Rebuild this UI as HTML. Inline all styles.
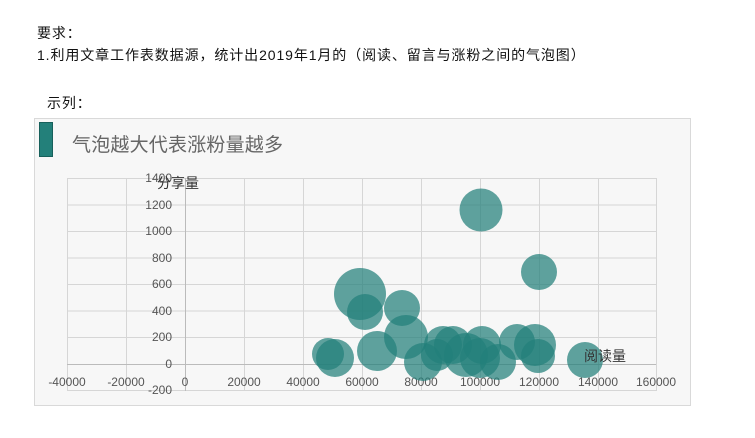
<!DOCTYPE html>
<html><head><meta charset="utf-8"><style>
body{margin:0;width:755px;height:438px;background:#fff;font-family:"Liberation Sans","Noto Sans CJK SC",sans-serif;position:relative;overflow:hidden}
.t{position:absolute;font-size:14px;color:#111;letter-spacing:0.9px;white-space:nowrap}
</style></head><body>
<div class="t" style="left:37px;top:23px">要求：</div>
<div class="t" style="left:37px;top:45px">1.利用文章工作表数据源，统计出2019年1月的（阅读、留言与涨粉之间的气泡图）</div>
<div class="t" style="left:47px;top:93px">示列：</div>
<svg style="position:absolute;left:0;top:0" width="755" height="438" font-family="Liberation Sans,Noto Sans CJK SC,sans-serif">
<rect x="34.5" y="118.5" width="656" height="287" fill="#f7f7f7" stroke="#d9d9d9"/>
<rect x="39.5" y="122.5" width="13" height="34" fill="#23807a" stroke="#17605b"/>
<text x="72" y="151" font-size="19" fill="#666" letter-spacing="0.2">气泡越大代表涨粉量越多</text>
<g stroke="#d6d6d6" stroke-width="1">
<line x1="67" y1="178.5" x2="656" y2="178.5"/><line x1="67" y1="205" x2="656" y2="205"/><line x1="67" y1="231.5" x2="656" y2="231.5"/><line x1="67" y1="258" x2="656" y2="258"/><line x1="67" y1="284.5" x2="656" y2="284.5"/><line x1="67" y1="311" x2="656" y2="311"/><line x1="67" y1="337.5" x2="656" y2="337.5"/><line x1="67" y1="390.5" x2="656" y2="390.5"/>
<line x1="67.5" y1="178" x2="67.5" y2="391"/><line x1="126.5" y1="178" x2="126.5" y2="391"/><line x1="244.5" y1="178" x2="244.5" y2="391"/><line x1="303.5" y1="178" x2="303.5" y2="391"/><line x1="362.5" y1="178" x2="362.5" y2="391"/><line x1="421.5" y1="178" x2="421.5" y2="391"/><line x1="480.5" y1="178" x2="480.5" y2="391"/><line x1="539.5" y1="178" x2="539.5" y2="391"/><line x1="598.5" y1="178" x2="598.5" y2="391"/><line x1="656.5" y1="178" x2="656.5" y2="391"/>
</g>
<g stroke="#bbb"><line x1="67" y1="364.5" x2="656" y2="364.5"/><line x1="185.5" y1="178" x2="185.5" y2="391"/></g>
<g font-size="12" fill="#555" text-anchor="end">
<text x="172" y="182">1400</text><text x="172" y="209">1200</text><text x="172" y="235">1000</text><text x="172" y="262">800</text><text x="172" y="288">600</text><text x="172" y="315">400</text><text x="172" y="341">200</text><text x="172" y="368">0</text><text x="172" y="394">-200</text>
</g>
<g font-size="12" fill="#555" text-anchor="middle">
<text x="67" y="386">-40000</text><text x="126" y="386">-20000</text><text x="185" y="386">0</text><text x="244" y="386">20000</text><text x="303" y="386">40000</text><text x="362" y="386">60000</text><text x="421" y="386">80000</text><text x="480" y="386">100000</text><text x="539" y="386">120000</text><text x="598" y="386">140000</text><text x="656" y="386">160000</text>
</g>
<g fill="#23807a" fill-opacity="0.72">
<circle cx="481" cy="210" r="21.5"/><circle cx="539" cy="272" r="18"/><circle cx="360" cy="294" r="26"/><circle cx="365" cy="312" r="18"/><circle cx="402" cy="308" r="18"/><circle cx="406" cy="337" r="22"/>
<circle cx="328" cy="354" r="16"/><circle cx="335" cy="358" r="19"/><circle cx="377" cy="351" r="20"/><circle cx="423" cy="362" r="19"/><circle cx="437" cy="355" r="16"/><circle cx="443" cy="345" r="19"/><circle cx="453" cy="345" r="19"/><circle cx="466" cy="355" r="22"/><circle cx="480" cy="358" r="20"/><circle cx="482" cy="345" r="19"/><circle cx="498" cy="362" r="18"/><circle cx="517" cy="342" r="18"/><circle cx="535" cy="345" r="21"/><circle cx="538" cy="356" r="17"/><circle cx="585" cy="360" r="18"/>
</g>
<text x="157" y="188" font-size="14" fill="#333">分享量</text>
<text x="584" y="361" font-size="14" fill="#333">阅读量</text>
</svg>
</body></html>
